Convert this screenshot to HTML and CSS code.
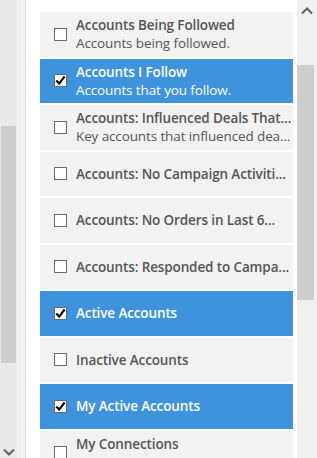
FILE: index.html
```html
<!DOCTYPE html>
<html lang="en">
<head>
  <meta charset="UTF-8">
  <meta name="viewport" content="width=device-width, initial-scale=1.0">
  <title>Views</title>
  <link rel="stylesheet" href="styles.css">
</head>
<body>

  <div class="panel">
    <div class="side">
      <div class="track">
        <div class="thumb left-thumb"></div>
        <div class="spacer"></div>
        <svg class="arrow" width="12" height="8" viewBox="0 0 12 8"><path d="M1 1.5 L6 6.5 L11 1.5" fill="none" stroke="#606060" stroke-width="2"/></svg>
      </div>
    </div>

    <div class="content">
      <ul class="views">
        <li class="view">
          <span class="box"></span>
          <div class="text">
            <div class="title">Accounts Being Followed</div>
            <div class="sub">Accounts being followed.</div>
          </div>
        </li>
        <li class="view selected">
          <span class="box"><svg width="11" height="11" viewBox="0 0 11 11"><path d="M1.3 5.6 L4.2 8.6 L9.6 1.4" fill="none" stroke="#000" stroke-width="2.2"/></svg></span>
          <div class="text">
            <div class="title">Accounts I Follow</div>
            <div class="sub">Accounts that you follow.</div>
          </div>
        </li>
        <li class="view">
          <span class="box"></span>
          <div class="text">
            <div class="title">Accounts: Influenced Deals That...</div>
            <div class="sub">Key accounts that influenced dea...</div>
          </div>
        </li>
        <li class="view">
          <span class="box"></span>
          <div class="text">
            <div class="title">Accounts: No Campaign Activiti...</div>
          </div>
        </li>
        <li class="view">
          <span class="box"></span>
          <div class="text">
            <div class="title">Accounts: No Orders in Last 6...</div>
          </div>
        </li>
        <li class="view">
          <span class="box"></span>
          <div class="text">
            <div class="title">Accounts: Responded to Campa...</div>
          </div>
        </li>
        <li class="view selected">
          <span class="box"><svg width="11" height="11" viewBox="0 0 11 11"><path d="M1.3 5.6 L4.2 8.6 L9.6 1.4" fill="none" stroke="#000" stroke-width="2.2"/></svg></span>
          <div class="text">
            <div class="title">Active Accounts</div>
          </div>
        </li>
        <li class="view">
          <span class="box"></span>
          <div class="text">
            <div class="title">Inactive Accounts</div>
          </div>
        </li>
        <li class="view selected">
          <span class="box"><svg width="11" height="11" viewBox="0 0 11 11"><path d="M1.3 5.6 L4.2 8.6 L9.6 1.4" fill="none" stroke="#000" stroke-width="2.2"/></svg></span>
          <div class="text">
            <div class="title">My Active Accounts</div>
          </div>
        </li>
        <li class="view">
          <span class="box"></span>
          <div class="text">
            <div class="title">My Connections</div>
            <div class="sub">&nbsp;</div>
          </div>
        </li>
      </ul>
    </div>

    <div class="scroll">
      <svg class="arrow" width="12" height="8" viewBox="0 0 12 8"><path d="M1 6.5 L6 1.5 L11 6.5" fill="none" stroke="#606060" stroke-width="2"/></svg>
      <div class="thumb right-thumb"></div>
    </div>
  </div>

</body>
</html>
```

FILE: styles.css
```css
body { margin: 0; background: #fff; font-family: "Open Sans", Arial, sans-serif; overflow: hidden; }
.panel { display: flex; width: 317px; height: 458px; overflow: hidden; }

.side {
  width: 25px;
  background: #f0f0f0;
  border-right: 1px solid #e2e2e2;
  flex-shrink: 0;
}
.track {
  width: 17px;
  height: 458px;
  display: flex;
  flex-direction: column;
  align-items: center;
  background: #e9e9e9;
}
.spacer { flex: 1; }
.track .arrow { margin-bottom: 2px; }

.thumb { background: #cdcdcd; }
.left-thumb { width: 15px; margin-top: 126px; height: 237px; }

.content { padding: 12px 0 0 14px; flex-shrink: 0; }
.views { list-style: none; margin: 0; padding: 0; width: 253px; }
.view {
  display: flex;
  align-items: center;
  height: 44.5px;
  margin-bottom: 2px;
  padding-left: 14px;
  background: #f2f2f2;
  color: #555;
  box-sizing: border-box;
}
.view.selected { background: #3f93dc; color: #fff; }

.box {
  width: 13px;
  height: 13px;
  box-sizing: border-box;
  border: 1px solid #6a6a6a;
  background: #fff;
  flex-shrink: 0;
  display: flex;
  align-items: center;
  justify-content: center;
}
.box svg { display: block; }

.text { margin-left: 9px; min-width: 0; flex: 1; }
.title, .sub {
  font-size: 13.5px;
  line-height: 18px;
  letter-spacing: -0.12px;
  white-space: nowrap;
  overflow: hidden;
}
.title { font-weight: 600; }

.scroll {
  width: 20px;
  margin-left: 4px;
  background: #f0f0f0;
  display: flex;
  flex-direction: column;
  align-items: center;
  flex-shrink: 0;
}
.scroll .arrow { margin-top: 7px; }
.right-thumb { width: 17px; margin-top: 50px; height: 235px; align-self: flex-start; }
```
